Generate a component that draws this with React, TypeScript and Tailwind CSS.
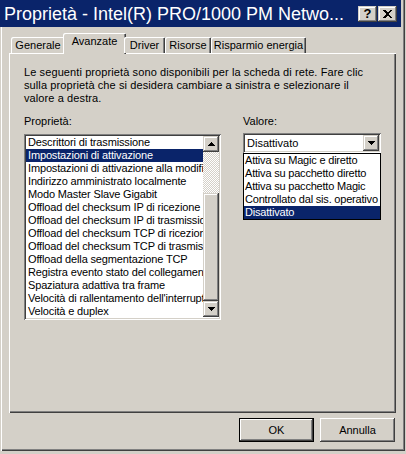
import React from 'react';

const RAISED = 'shadow-[inset_-1px_-1px_0_#404040,inset_1px_1px_0_#ffffff,inset_-2px_-2px_0_#808080,inset_2px_2px_0_#d4d0c8]';
const RAISED_SB = 'shadow-[inset_-1px_-1px_0_#404040,inset_1px_1px_0_#d4d0c8,inset_-2px_-2px_0_#808080,inset_2px_2px_0_#ffffff]';
const SUNKEN = 'shadow-[inset_1px_1px_0_#808080,inset_-1px_-1px_0_#ffffff,inset_2px_2px_0_#404040,inset_-2px_-2px_0_#d4d0c8]';

const properties = [
    'Descrittori di trasmissione',
    'Impostazioni di attivazione',
    'Impostazioni di attivazione alla modifica',
    'Indirizzo amministrato localmente',
    'Modo Master Slave Gigabit',
    'Offload del checksum IP di ricezione',
    'Offload del checksum IP di trasmissione',
    'Offload del checksum TCP di ricezione',
    'Offload del checksum TCP di trasmissione',
    'Offload della segmentazione TCP',
    'Registra evento stato del collegamento',
    'Spaziatura adattiva tra frame',
    "Velocità di rallentamento dell'interrupt",
    'Velocità e duplex',
];

const values = [
    'Attiva su Magic e diretto',
    'Attiva su pacchetto diretto',
    'Attiva su pacchetto Magic',
    'Controllato dal sis. operativo',
    'Disattivato',
];

const tabs = ['Generale', 'Avanzate', 'Driver', 'Risorse', 'Risparmio energia'];
const tabWidths: Record<string, string> = {
    Generale: 'w-[54px]',
    Avanzate: 'w-[63px]',
    Driver: 'w-[41px]',
    Risorse: 'w-[46px]',
    'Risparmio energia': 'w-[95px]',
};

const Arrow = ({ down }: { down?: boolean }) => (
    <svg width="7" height="4" viewBox="0 0 7 4" shapeRendering="crispEdges" className={down ? 'rotate-180' : ''}>
        <path d="M3 0h1v1h1v1h1v1h1v1H0V3h1V2h1V1h1z" fill="#000" />
    </svg>
);

export default function App() {
    return (
        <div className="w-[406px] h-[454px] bg-[#d4d0c8] font-['Liberation_Sans',Arial,sans-serif] text-[11px] leading-[13px] text-black">
            <div className="flex h-[451px] w-[405px] flex-col shadow-[inset_1px_0_0_#d4d0c8,inset_2px_0_0_#ffffff,inset_-1px_-1px_0_#404040,inset_-2px_-2px_0_#808080]">
                {/* title bar */}
                <div className="flex h-[27px] w-[401px] items-center bg-[#0a246a] pl-[4px] pr-[4px]">
                    <span className="flex-1 whitespace-nowrap text-[18px] leading-[20px] text-white">
                        Proprietà - Intel(R) PRO/1000 PM Netwo...
                    </span>
                    <div className={`flex h-[16px] w-[19px] items-center justify-center bg-[#d4d0c8] ${RAISED_SB}`}>
                        <span className="text-[13px] font-bold leading-[13px]">?</span>
                    </div>
                    <div className={`ml-[1px] flex h-[16px] w-[19px] items-center justify-center bg-[#d4d0c8] ${RAISED_SB}`}>
                        <svg width="9" height="8" viewBox="0 0 9 8" shapeRendering="crispEdges">
                            <path d="M0 0h2l2.5 2.5L7 0h2L5.5 4 9 8H7L4.5 5.5 2 8H0l3.5-4z" fill="#000" />
                        </svg>
                    </div>
                </div>

                <div className="flex flex-col px-[9px] pt-[6px]">
                    {/* tabs */}
                    <div className="relative z-10 flex h-[20px] items-end pl-[2px]">
                        {tabs.map(t => {
                            const active = t === 'Avanzate';
                            return (
                                <div
                                    key={t}
                                    className={`${tabWidths[t]} flex justify-center bg-[#d4d0c8] shadow-[inset_1px_1px_0_#ffffff,inset_-1px_0_0_#404040,inset_-2px_0_0_#808080] ${
                                        active ? '-mx-[2px] -mb-px h-[21px] pt-[2px]' : 'h-[16px] pt-[2px]'
                                    } rounded-tl-[2px] rounded-tr-[1px]`}
                                >
                                    <span className="whitespace-nowrap">{t}</span>
                                </div>
                            );
                        })}
                    </div>

                    {/* panel */}
                    <div className="flex h-[360px] flex-col pl-[15px] pt-[13px] shadow-[inset_1px_1px_0_#ffffff,inset_-1px_-1px_0_#404040,inset_-2px_-2px_0_#808080]">
                        <p className="whitespace-nowrap tracking-[0.1px]">
                            Le seguenti proprietà sono disponibili per la scheda di rete. Fare clic
                            <br />
                            sulla proprietà che si desidera cambiare a sinistra e selezionare il
                            <br />
                            valore a destra.
                        </p>

                        <div className="mt-[10px] flex gap-[22px]">
                            <div className="flex w-[197px] flex-col">
                                <span>Proprietà:</span>
                                <div className={`mt-[6px] flex h-[186px] bg-white p-[2px] ${SUNKEN}`}>
                                    <div className="flex w-[177px] flex-col overflow-hidden whitespace-nowrap tracking-[-0.15px]">
                                        {properties.map((p, i) => (
                                            <div
                                                key={p}
                                                className={`h-[13px] overflow-hidden pl-[2px] ${i === 1 ? 'bg-[#0a246a] text-white' : ''}`}
                                            >
                                                {p}
                                            </div>
                                        ))}
                                    </div>
                                    <div className="flex w-[16px] flex-col">
                                        <div className={`flex h-[16px] items-center justify-center bg-[#d4d0c8] ${RAISED_SB}`}>
                                            <Arrow />
                                        </div>
                                        <div className="h-[41px] bg-[image:repeating-conic-gradient(#ffffff_0%_25%,#d4d0c8_0%_50%)] bg-[length:2px_2px]" />
                                        <div className={`h-[108px] bg-[#d4d0c8] ${RAISED_SB}`} />
                                        <div className={`flex h-[16px] items-center justify-center bg-[#d4d0c8] ${RAISED_SB}`}>
                                            <Arrow down />
                                        </div>
                                    </div>
                                </div>
                            </div>

                            <div className="flex w-[138px] flex-col">
                                <span>Valore:</span>
                                <div className={`relative mt-[5px] flex h-[20px] items-center bg-white p-[2px] ${SUNKEN}`}>
                                    <span className="flex-1 pl-[2px]">Disattivato</span>
                                    <div className={`flex h-[16px] w-[16px] items-center justify-center bg-[#d4d0c8] ${RAISED_SB}`}>
                                        <Arrow down />
                                    </div>
                                    <div className="absolute left-0 top-[20px] z-20 flex w-[138px] flex-col border border-black bg-white tracking-[-0.2px]">
                                        {values.map(v => (
                                            <div
                                                key={v}
                                                className={`h-[13px] whitespace-nowrap pl-[1px] ${v === 'Disattivato' ? 'bg-[#0a246a] text-white' : ''}`}
                                            >
                                                {v}
                                            </div>
                                        ))}
                                    </div>
                                </div>
                            </div>
                        </div>
                    </div>
                </div>

                {/* buttons */}
                <div className="mt-[5px] flex justify-end gap-[6px] pr-[10px]">
                    <button className="flex h-[24px] w-[75px] items-center justify-center bg-[#d4d0c8] shadow-[inset_0_0_0_1px_#000000,inset_-2px_-2px_0_#404040,inset_2px_2px_0_#ffffff,inset_-3px_-3px_0_#808080]">
                        OK
                    </button>
                    <button className={`flex h-[24px] w-[75px] items-center justify-center bg-[#d4d0c8] ${RAISED}`}>
                        Annulla
                    </button>
                </div>
            </div>
        </div>
    );
}
